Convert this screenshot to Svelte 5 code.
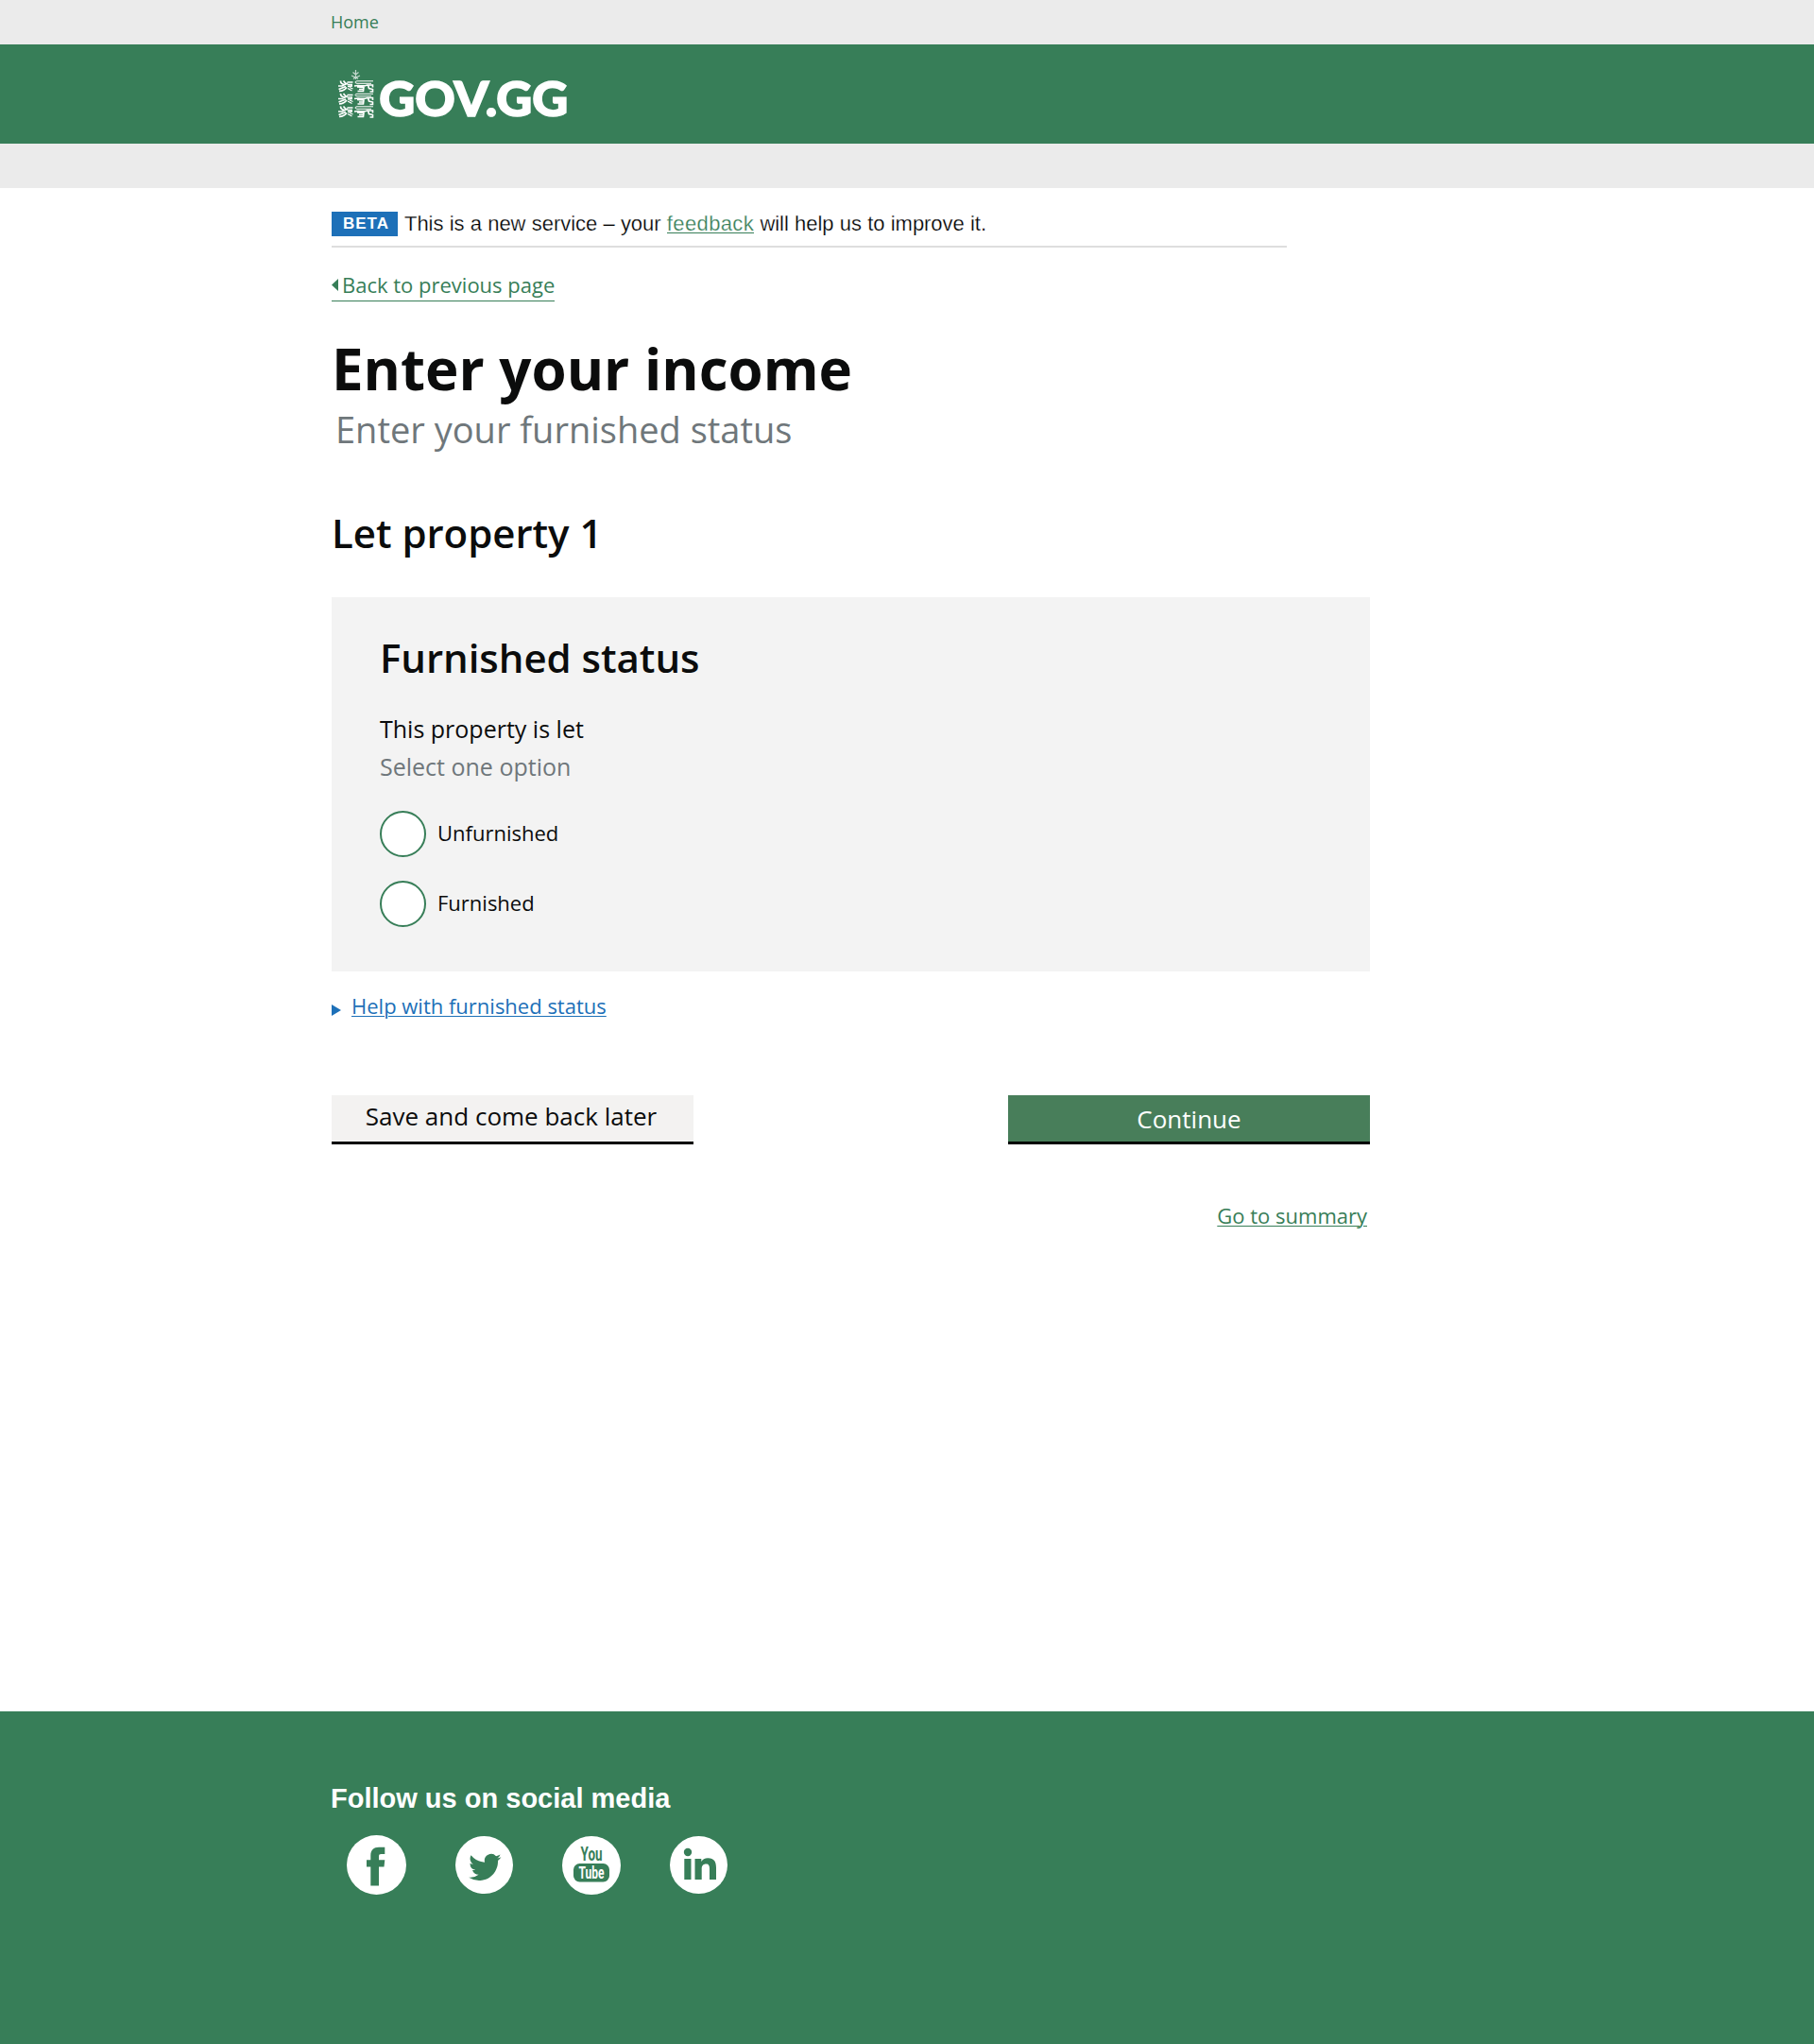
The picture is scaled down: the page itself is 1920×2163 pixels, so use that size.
<script>
  const options = ['Unfurnished', 'Furnished'];
</script>

<div class="page">
  <div class="crumbs"><a href="#home">Home</a></div>
  <header>
    <svg class="logo" width="270" height="75" viewBox="350 70 270 75" role="img" aria-label="GOV.GG">
      <defs>
        <g id="lion" fill="none" stroke="#fff">
          <path d="M2.500 0.500Q2.500 4 6.500 4.500M5.500 0.500L8 3.500M0 6H4L10 3M1 11.300Q6 11.500 9 7.500M0.500 9.500L8 6.500" stroke-width="1.700" />
          <path d="M9.500 2H15.500M9.500 4.500H15M10 6.500L15 6M10 8.500L14.500 11M12 7.500L15.500 9" stroke-width="1.300" />
          <path d="M37 .8H20Q18 .8 18 2T20 3.300H35" stroke-width="1" />
          <path d="M17 6L21 5.500Q27 6.500 31 5H36.500V7.500M20 7L27 7.500L26.500 11.500H20.500M22 9.500H27M31.500 5L32.500 8.500L36.500 9.500V12H33.500" stroke-width="1.600" />
        </g>
      </defs>
      <path d="M376.500 74V84M373.500 76.500L376.500 79L379.500 76.500M372 80L376.500 82L381 80M374 83.500L376.500 81.500L379 83.500" stroke="#fff" stroke-opacity=".7" stroke-width="1.200" fill="none" />
      <use href="#lion" x="358" y="85" />
      <use href="#lion" x="358" y="98.500" />
      <use href="#lion" x="358" y="112" />
      <text x="401.300" y="123" textLength="200" lengthAdjust="spacingAndGlyphs">GOV.GG</text>
    </svg>
  </header>
  <div class="band"></div>

  <main>
    <div class="phase">
      <strong>BETA</strong>
      <span class="notice">This is a new service – your <a href="#feedback">feedback</a> will help us to improve it.</span>
    </div>
    <a class="back" href="#back"><svg width="7" height="13" viewBox="0 0 7 13"><path d="M7 0V13L0 6.500Z" /></svg><span>Back to previous page</span></a>
    <h1>Enter your income</h1>
    <p class="sub">Enter your furnished status</p>
    <h2>Let property 1</h2>

    <section>
      <h2 class="status">Furnished status</h2>
      <p class="question">This property is let</p>
      <p class="hint">Select one option</p>
      {#each options as option}
        <label><input type="radio" name="status" /><span>{option}</span></label>
      {/each}
    </section>

    <a class="help" href="#help"><svg width="10" height="12" viewBox="0 0 10 12"><path d="M0 0L10 6L0 12Z" /></svg><span>Help with furnished status</span></a>

    <div class="actions">
      <button class="save"><span>Save and come back later</span></button>
      <button class="continue"><span>Continue</span></button>
    </div>
    <div class="summary"><a href="#summary">Go to summary</a></div>
  </main>

  <footer>
    <h3>Follow us on social media</h3>
    <div class="social">
      <svg width="63" height="63" viewBox="0 0 63 63" role="img" aria-label="Facebook">
        <circle cx="31.500" cy="31.500" r="31.500" fill="#fff" />
        <path d="M25.300 53.500V33.500H21V26.200H25.300V21.500C25.300 15.500 28.500 12.700 34 12.700H40.300V20H36.500C34.500 20 34 20.800 34 22.500V26.200H40.300L39.500 33.500H34V53.500Z" />
      </svg>
      <svg width="61" height="61" viewBox="0 0 61 61" role="img" aria-label="Twitter">
        <circle cx="30.500" cy="30.500" r="30.500" fill="#fff" />
        <g transform="translate(14.200 15.800) scale(1.430)"><path d="M23.950 4.570a10 10 0 0 1-2.820.77 4.960 4.960 0 0 0 2.160-2.720 9.900 9.900 0 0 1-3.120 1.190 4.920 4.920 0 0 0-8.390 4.480A14 14 0 0 1 1.640 3.160a4.920 4.920 0 0 0 1.520 6.570 4.900 4.900 0 0 1-2.230-.61v.06a4.920 4.920 0 0 0 3.950 4.830 5 5 0 0 1-2.210.08 4.940 4.940 0 0 0 4.600 3.420A9.870 9.870 0 0 1 0 19.540a14 14 0 0 0 7.550 2.210c9.050 0 14-7.500 14-13.980l-.02-.63a10 10 0 0 0 2.420-2.570z" /></g>
      </svg>
      <svg width="62" height="62" viewBox="0 0 62 62" role="img" aria-label="YouTube">
        <circle cx="31" cy="31" r="31" fill="#fff" />
        <text class="tube" x="19.500" y="26" font-size="20" textLength="23" lengthAdjust="spacingAndGlyphs">You</text>
        <rect x="12" y="29" width="38" height="19.500" rx="6.500" />
        <text class="tube light" x="17.500" y="44.500" font-size="18" textLength="27" lengthAdjust="spacingAndGlyphs">Tube</text>
      </svg>
      <svg width="61" height="61" viewBox="0 0 61 61" role="img" aria-label="LinkedIn">
        <circle cx="30.500" cy="30.500" r="30.500" fill="#fff" />
        <circle cx="19" cy="17" r="4.200" />
        <path d="M15.300 24H22.500V46H15.300ZM26.500 24H33.300V27C34.500 24.800 37 23.300 40.300 23.300C47 23.300 49 27.500 49 33.500V46H42V34.700C42 31.500 41.300 29.500 38.300 29.500C35 29.500 33.700 31.700 33.700 34.700V46H26.500Z" />
      </svg>
    </div>
  </footer>
</div>

<style>
  :global(body) { margin: 0; background: #fff; }
  .page {
    height: 2163px;
    display: flex;
    flex-direction: column;
    font-family: 'Open Sans', sans-serif;
    color: #0b0c0c;
  }
  h1, h2, h3, p { margin: 0; }
  svg { flex-shrink: 0; }
  a { color: #377e58; text-decoration-thickness: 1px; }
  .crumbs { height: 47px; padding-left: 350px; background: #ebebeb; font-size: 18px; line-height: 47px; }
  .crumbs a { text-decoration: none; }
  header { height: 105px; padding-left: 350px; background: #377e58; box-sizing: border-box; padding-top: 23px; }
  .logo { display: block; overflow: visible; }
  .logo text { font: 900 52px Lato, sans-serif; fill: #fff; stroke: #fff; stroke-width: 1.6px; }
  .band { height: 47px; background: #ebebeb; }

  main { width: 1099px; margin-left: 351px; flex: 1; display: flex; flex-direction: column; align-items: flex-start; }
  .phase {
    width: 1011px;
    height: 40px;
    margin-top: 23px;
    padding-top: 2px;
    border-bottom: 2px solid #dedede;
    box-sizing: border-box;
    display: flex;
    font-family: 'Liberation Sans', sans-serif;
  }
  .phase strong {
    width: 70px;
    height: 26px;
    margin-right: 7px;
    padding-left: 3px;
    box-sizing: border-box;
    background: #1d70b8;
    color: #fff;
    font-size: 17px;
    line-height: 25px;
    letter-spacing: 1px;
    text-align: center;
  }
  .notice { font-size: 22px; line-height: 26px; letter-spacing: -.04px; word-spacing: .2px; white-space: nowrap; color: #000; -webkit-text-stroke: .25px #fff; }
  .notice a { letter-spacing: .38px; text-decoration: none; background: linear-gradient(#377e58, #377e58) 0 22px / 100% 1px no-repeat; }
  .back { display: flex; align-items: center; gap: 4px; width: 236px; height: 33px; margin-top: 23px; border-bottom: 1px solid #377e58; text-decoration: none; font-size: 22px; white-space: nowrap; }
  .back svg { fill: #377e58; }
  .back span { padding-bottom: 2px; }
  h1 { margin-top: 31px; font-size: 60px; line-height: 80px; font-weight: 700; }
  .sub { margin: -1px 0 0 4px; font-size: 38px; line-height: 50px; color: #6f777b; }
  h2 { margin-top: 55px; font-size: 42px; line-height: 60px; font-weight: 600; letter-spacing: -.04px; }
  section { width: 1099px; height: 396px; margin-top: 38px; padding: 34px 51px 0; box-sizing: border-box; background: #f3f3f3; }
  .status { margin: 0; }
  .question { margin-top: 25px; font-size: 25px; line-height: 40px; }
  .hint { margin-bottom: 27px; font-size: 25px; line-height: 40px; color: #6f777b; }
  label { display: flex; align-items: center; gap: 12px; height: 49px; margin-bottom: 25px; font-size: 22px; }
  label span { padding-bottom: 3px; }
  input { appearance: none; width: 49px; height: 49px; margin: 0; border: 2px solid #377e58; border-radius: 50%; background: #fff; }
  .help { display: flex; align-items: center; gap: 11px; margin-top: 20px; height: 32px; color: #1d70b8; font-size: 22px; text-decoration: none; white-space: nowrap; }
  .help span { text-decoration: underline 1px; text-underline-offset: 2px; }
  .help svg { fill: #1d70b8; margin-top: 10px; }
  .actions { width: 100%; display: flex; justify-content: space-between; margin-top: 79px; }
  button { width: 383px; height: 52px; padding: 0; border: 0; border-bottom: 3px solid #000; background: #f3f2f1; color: #0b0c0c; font: 26px 'Open Sans', sans-serif; }
  .save { padding: 0 3px 6px 0; }
  .continue { background: #487e5a; color: #fff; }
  .summary { width: 100%; box-sizing: border-box; padding-right: 3px; margin-top: 59px; text-align: right; font-size: 22px; line-height: 32px; }
  .summary a { text-underline-offset: 2px; }

  footer { height: 352px; box-sizing: border-box; padding: 73px 0 0 350px; background: #377e58; color: #fff; }
  h3 { font: 700 29px/38px 'Liberation Sans', sans-serif; }
  .social { display: flex; align-items: center; gap: 52px; margin: 20px 0 0 17px; fill: #377e58; }
  .tube { font-family: Roboto, sans-serif; font-weight: 700; }
  .light { fill: #fff; }
</style>
